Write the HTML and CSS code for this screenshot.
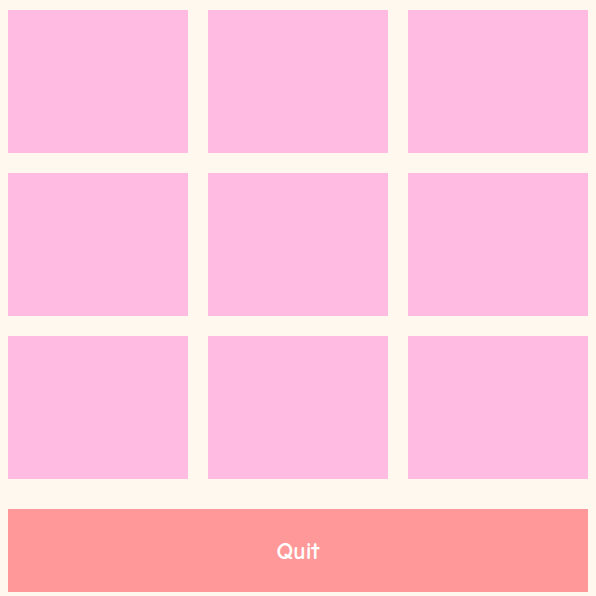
FILE: index.html
```html
<!DOCTYPE html>
<html lang="en">
<head>
    <meta charset="UTF-8">
    <meta name="viewport" content="width=device-width, initial-scale=1.0">
    <title>Memory Game</title>
    <link rel="stylesheet" href="styles.css">
</head>
<body>
    <div class="board">
        <div class="card"></div>
        <div class="card"></div>
        <div class="card"></div>
        <div class="card"></div>
        <div class="card"></div>
        <div class="card"></div>
        <div class="card"></div>
        <div class="card"></div>
        <div class="card"></div>
    </div>
    <button class="quit">Quit</button>
</body>
</html>
```

FILE: styles.css
```css
body {
    font-family: "Comic Sans MS", "Comic Neue", cursive, sans-serif;
    background-color: #fff8ef;
    margin: 0;
    padding: 10px 8px 0;
}
.board {
    display: grid;
    grid-template-columns: repeat(3, 180px);
    grid-auto-rows: 143px;
    gap: 20px;
}
.card {
    background-color: #ffbbe2;
}
.quit {
    display: block;
    width: 580px;
    height: 83px;
    margin-top: 30px;
    border: none;
    background-color: #ff9999;
    color: #fff;
    font-family: inherit;
    font-size: 24px;
    font-weight: bold;
    cursor: pointer;
}
```
